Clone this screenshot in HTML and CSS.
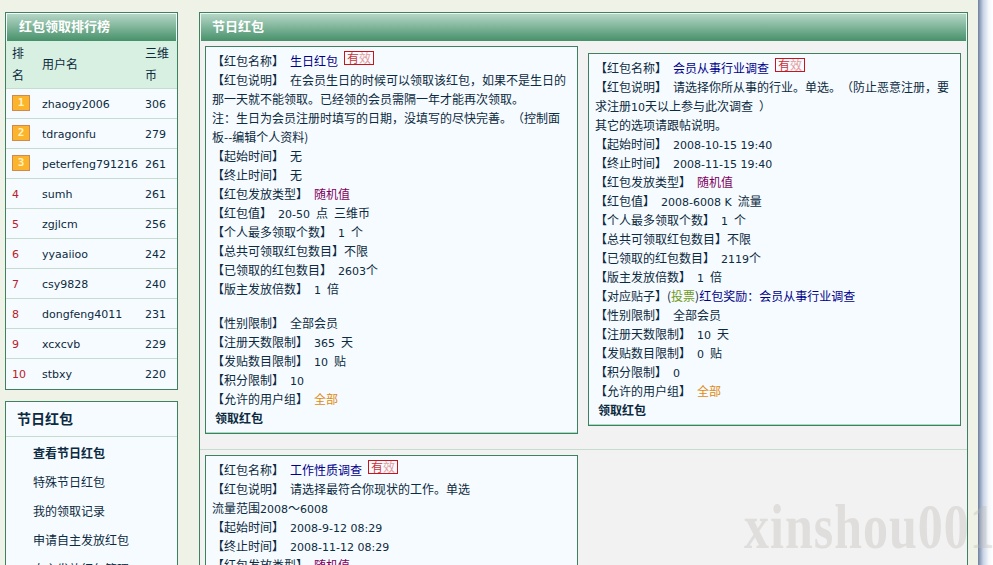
FILE: index.html
```html
<!DOCTYPE html>
<html lang="zh">
<head>
<meta charset="utf-8">
<title>节日红包</title>
<link rel="stylesheet" href="styles.css">
</head>
<body>
<div class="page">
  <aside class="side">
    <section class="box rank">
      <h2 class="bar bar-side">红包领取排行榜</h2>
      <table class="rank-table">
        <tr class="head"><td class="c1">排名</td><td class="c2">用户名</td><td class="c3">三维币</td></tr>
        <tr><td class="c1"><span class="medal">1</span></td><td class="c2"><span class="n">zhaogy2006</span></td><td class="c3"><span class="n">306</span></td></tr>
        <tr><td class="c1"><span class="medal">2</span></td><td class="c2"><span class="n">tdragonfu</span></td><td class="c3"><span class="n">279</span></td></tr>
        <tr><td class="c1"><span class="medal">3</span></td><td class="c2"><span class="n">peterfeng791216</span></td><td class="c3"><span class="n">261</span></td></tr>
        <tr><td class="c1 red"><span class="n">4</span></td><td class="c2"><span class="n">sumh</span></td><td class="c3"><span class="n">261</span></td></tr>
        <tr><td class="c1 red"><span class="n">5</span></td><td class="c2"><span class="n">zgjlcm</span></td><td class="c3"><span class="n">256</span></td></tr>
        <tr><td class="c1 red"><span class="n">6</span></td><td class="c2"><span class="n">yyaaiioo</span></td><td class="c3"><span class="n">242</span></td></tr>
        <tr><td class="c1 red"><span class="n">7</span></td><td class="c2"><span class="n">csy9828</span></td><td class="c3"><span class="n">240</span></td></tr>
        <tr><td class="c1 red"><span class="n">8</span></td><td class="c2"><span class="n">dongfeng4011</span></td><td class="c3"><span class="n">231</span></td></tr>
        <tr><td class="c1 red"><span class="n">9</span></td><td class="c2"><span class="n">xcxcvb</span></td><td class="c3"><span class="n">229</span></td></tr>
        <tr><td class="c1 red"><span class="n">10</span></td><td class="c2"><span class="n">stbxy</span></td><td class="c3"><span class="n">220</span></td></tr>
      </table>
    </section>
    <nav class="box menu">
      <h3 class="menu-title">节日红包</h3>
      <ul class="menu-list">
        <li class="on">查看节日红包</li>
        <li>特殊节日红包</li>
        <li>我的领取记录</li>
        <li>申请自主发放红包</li>
        <li>自主发放红包管理</li>
      </ul>
    </nav>
  </aside>
  <main class="box main">
    <h2 class="bar">节日红包</h2>
    <div class="grid">
      <div class="cell cell-a">
        <article class="card">
          <p><span class="k">【红包名称】</span> <a class="title">生日红包</a><span class="valid">有<i>效</i></span></p>
          <p><span class="k">【红包说明】</span> 在会员生日的时候可以领取该红包，如果不是生日的那一天就不能领取。已经领的会员需隔一年才能再次领取。</p>
          <p>注：生日为会员注册时填写的日期，没填写的尽快完善。（控制面板--编辑个人资料)</p>
          <p><span class="k">【起始时间】</span> 无</p>
          <p><span class="k">【终止时间】</span> 无</p>
          <p><span class="k">【红包发放类型】</span> <em class="purple">随机值</em></p>
          <p><span class="k">【红包值】</span> <span class="n">20-50</span> 点 三维币</p>
          <p><span class="k">【个人最多领取个数】</span> <span class="n">1</span> 个</p>
          <p><span class="k">【总共可领取红包数目】</span>不限</p>
          <p><span class="k">【已领取的红包数目】</span> <span class="n">2603</span>个</p>
          <p><span class="k">【版主发放倍数】</span> <span class="n">1</span> 倍</p>
          <p class="gap"><span class="k">【性别限制】</span> 全部会员</p>
          <p><span class="k">【注册天数限制】</span> <span class="n">365</span> 天</p>
          <p><span class="k">【发贴数目限制】</span> <span class="n">10</span> 贴</p>
          <p><span class="k">【积分限制】</span> <span class="n">10</span></p>
          <p><span class="k">【允许的用户组】</span> <em class="orange">全部</em></p>
          <p class="take">领取红包</p>
        </article>
      </div>
      <div class="cell cell-b">
        <article class="card">
          <p><span class="k">【红包名称】</span> <a class="title">会员从事行业调查</a><span class="valid">有<i>效</i></span></p>
          <p><span class="k">【红包说明】</span> 请选择你所从事的行业。单选。（防止恶意注册，要求注册<span class="n">10</span>天以上参与此次调查 ）</p>
          <p>其它的选项请跟帖说明。</p>
          <p><span class="k">【起始时间】</span> <span class="n">2008-10-15 19:40</span></p>
          <p><span class="k">【终止时间】</span> <span class="n">2008-11-15 19:40</span></p>
          <p><span class="k">【红包发放类型】</span> <em class="purple">随机值</em></p>
          <p><span class="k">【红包值】</span> <span class="n">2008-6008 K</span> 流量</p>
          <p><span class="k">【个人最多领取个数】</span> <span class="n">1</span> 个</p>
          <p><span class="k">【总共可领取红包数目】</span>不限</p>
          <p><span class="k">【已领取的红包数目】</span> <span class="n">2119</span>个</p>
          <p><span class="k">【版主发放倍数】</span> <span class="n">1</span> 倍</p>
          <p><span class="k">【对应贴子】</span>(<em class="green">投票</em>)<a class="title">红包奖励：会员从事行业调查</a></p>
          <p><span class="k">【性别限制】</span> 全部会员</p>
          <p><span class="k">【注册天数限制】</span> <span class="n">10</span> 天</p>
          <p><span class="k">【发贴数目限制】</span> <span class="n">0</span> 贴</p>
          <p><span class="k">【积分限制】</span> <span class="n">0</span></p>
          <p><span class="k">【允许的用户组】</span> <em class="orange">全部</em></p>
          <p class="take">领取红包</p>
        </article>
      </div>
      <div class="cell cell-c">
        <article class="card">
          <p><span class="k">【红包名称】</span> <a class="title">工作性质调查</a><span class="valid">有<i>效</i></span></p>
          <p><span class="k">【红包说明】</span> 请选择最符合你现状的工作。单选</p>
          <p>流量范围<span class="n">2008</span>～<span class="n">6008</span></p>
          <p><span class="k">【起始时间】</span> <span class="n">2008-9-12 08:29</span></p>
          <p><span class="k">【终止时间】</span> <span class="n">2008-11-12 08:29</span></p>
          <p><span class="k">【红包发放类型】</span> <em class="purple">随机值</em></p>
        </article>
      </div>
      <div class="cell cell-d"></div>
    </div>
  </main>
  <div class="edge"></div>
</div>
<div class="watermark">xinshou001</div>
</body>
</html>
```

FILE: styles.css
```css
html, body { margin: 0; height: 565px; overflow: hidden; }
body {
  background: #eff2e7;
  color: #0c2a40;
  font: 12px/19px "Noto Sans CJK SC", sans-serif;
  position: relative;
  text-spacing-trim: space-all;
}
.page { display: flex; align-items: flex-start; padding: 12px 0 0 5px; height: 553px; overflow: hidden; }
.n { font-family: "DejaVu Sans", sans-serif; font-size: 11px; line-height: 1; word-spacing: 0; }
.box { border: 1px solid #3e8060; background: #f6fbff; box-sizing: border-box; }
.side { width: 173px; margin-right: 21px; flex: none; }
.rank { padding-bottom: 1px; }
.bar {
  margin: 1px 1px 0;
  height: 27px;
  line-height: 24px;
  padding-left: 11px;
  font-size: 13px;
  font-weight: bold;
  color: #fff;
  background: linear-gradient(#b5d6c6, #46916a);
}
.bar-side { padding-left: 12px; }
.rank-table { width: 100%; border-collapse: collapse; table-layout: fixed; }
.rank-table td { padding: 0 0 3px; border-bottom: 1px solid #c5dccf; height: 26px; vertical-align: middle; }
.rank-table tr:last-child td { border-bottom: 0; }
.rank-table .head td { background: #d8f0e2; height: 46px; padding-bottom: 1px; line-height: 22px; }
.rank-table .c1 { width: 36px; padding-left: 6px; padding-right: 7px; box-sizing: border-box; }
.c3 { width: 32px; }
.red { color: #b8202a; }
.medal {
  display: block;
  width: 16px;
  height: 14px;
  margin-top: 2px;
  border: 1px solid #d08a50;
  background: #fcb42c;
  color: #fff3c0;
  font: bold 11px/14px "DejaVu Sans Mono", monospace;
  text-align: center;
}
.menu { margin-top: 11px; height: 200px; }
.menu-title { margin: 0; height: 35px; line-height: 33px; font-size: 14px; font-weight: bold; padding-left: 11px; border-bottom: 1px solid #c5dccf; box-sizing: border-box; }
.menu-list { list-style: none; margin: 0; padding: 1px 0 0 27px; }
.menu-list li { height: 29px; line-height: 29px; }
.menu-list .on { font-weight: bold; }
.main { width: 769px; flex: none; height: 600px; background: #f2f2f2; }
.grid { display: grid; grid-template-columns: 384px 383px; grid-template-rows: 409px auto; }
.cell { box-sizing: border-box; }
.cell-a { padding: 5px 6px 0 5px; border-bottom: 1px solid #c5dccf; }
.cell-b { padding: 12px 6px 0 4px; border-bottom: 1px solid #c5dccf; }
.cell-c { padding: 5px 6px 0 5px; }
.card {
  border: 1px solid #3e8060;
  background: #f6fbff;
  box-shadow: inset 0 -1px 0 #a8dcc0;
  padding: 4px 6px;
  box-sizing: border-box;
  line-height: 19px;
  word-spacing: 3.3px;
}
.cell-a .card { height: 388px; }
.cell-b .card { height: 373px; }
.card p { margin: 0; }
.title { color: #00008b; }
em { font-style: normal; }
.purple { color: #800060; }
.orange { color: #e08a10; }
.green { color: #6f9a20; }
.gap { margin-top: 15px !important; }
.card .take { font-weight: bold; padding-left: 3px; }
.valid {
  display: inline-block;
  width: 28px;
  height: 12px;
  line-height: 12px;
  margin-left: 6px;
  border: 1px solid #c8141c;
  color: #c8343a;
  vertical-align: top;
  overflow: hidden;
  text-align: center;
}
.valid i { font-style: normal; color: #e59a9a; }
.edge {
  position: absolute;
  left: 978px; top: 0; bottom: 0; width: 15px;
  background: linear-gradient(90deg, #6f7f9e, #c8d4e6 35%, #f4f6fa 70%, #fff);
}
.watermark {
  position: absolute;
  left: 744px; top: 497px;
  font: bold 50px/60px "Liberation Serif", serif;
  letter-spacing: 1px;
  color: rgba(190, 186, 180, .35);
  white-space: nowrap;
  transform: scaleY(1.25);
}
```
